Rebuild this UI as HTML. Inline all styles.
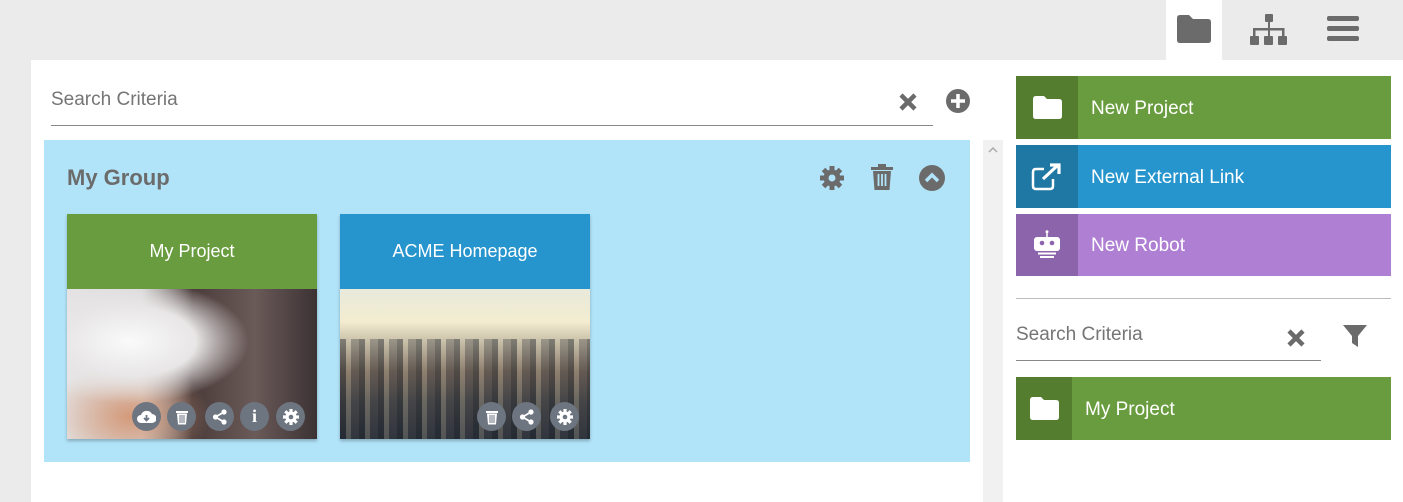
<!DOCTYPE html>
<html><head><style>
*{box-sizing:border-box;margin:0;padding:0}
body{width:1403px;height:502px;background:#ebebeb;font-family:"Liberation Sans",sans-serif;position:relative;overflow:hidden}
.a{position:absolute}
.gray{fill:#6b6b6b}
.btn{position:absolute;left:1016px;width:375px;color:#fff;font-size:19px}
.btn .ic{position:absolute;left:0;top:0;width:62px;height:100%;display:flex;align-items:center;justify-content:center}
.btn span{position:absolute;left:75px;top:50%;transform:translateY(-45%)}
.circ{position:absolute;width:29px;height:29px;border-radius:50%;background:#6d7580;display:flex;align-items:center;justify-content:center}
</style></head><body>
<div class="a" style="left:1166px;top:0;width:56px;height:60px;background:#fff"></div>
<svg class="a" style="left:1176px;top:14px" width="36" height="30"><path class="gray" d="M1 4q0-3 3-3h9l4 4h15q3 0 3 3v18q0 3-3 3H4q-3 0-3-3z"/></svg>
<svg class="a" style="left:1250px;top:14px" width="38" height="32"><g class="gray"><rect x="15" y="0" width="8" height="8" rx="1"/><rect x="0" y="22" width="9" height="9" rx="1"/><rect x="14" y="22" width="9" height="9" rx="1"/><rect x="28" y="22" width="9" height="9" rx="1"/><rect x="18" y="8" width="2" height="14"/><rect x="3" y="14" width="31" height="2.5"/><rect x="3" y="14" width="2.5" height="8"/><rect x="32" y="14" width="2.5" height="8"/></g></svg>
<svg class="a" style="left:1327px;top:16px" width="33" height="28"><g class="gray"><rect x="0" y="0" width="32" height="5" rx="2"/><rect x="0" y="10" width="32" height="5" rx="2"/><rect x="0" y="20" width="32" height="5" rx="2"/></g></svg>
<div class="a" style="left:31px;top:60px;width:1372px;height:442px;background:#fff"></div>
<div class="a" style="left:51px;top:89px;font-size:19px;color:#757575">Search Criteria</div>
<div class="a" style="left:51px;top:125px;width:882px;height:1px;background:#888"></div>
<svg class="a" style="left:898px;top:92px" width="20" height="20"><path d="M3 3L17 17M17 3L3 17" stroke="#6b6b6b" stroke-width="4.5"/></svg>
<svg class="a" style="left:945px;top:88px" width="26" height="26"><circle cx="13" cy="13" r="12" fill="#6b6b6b"/><path d="M13 6v14M6 13h14" stroke="#fff" stroke-width="3.5"/></svg>
<div class="a" style="left:983px;top:140px;width:20px;height:362px;background:#f1f1f1"></div>
<svg class="a" style="left:987px;top:145px" width="12" height="10"><path d="M2 7l4-4 4 4" stroke="#aaa" stroke-width="1.5" fill="none"/></svg>
<div class="a" style="left:44px;top:140px;width:926px;height:322px;background:#b1e3f9"></div>
<div class="a" style="left:67px;top:165px;font-size:22px;font-weight:bold;color:#6b6b6b">My Group</div>
<svg class="a" style="left:819px;top:165px" width="26" height="26" viewBox="0 0 26 26"><g fill="#6b6b6b"><circle cx="13" cy="13" r="8.5"/><g stroke="#6b6b6b" stroke-width="5"><path d="M13 1v24M1 13h24M4.5 4.5l17 17M21.5 4.5l-17 17"/></g></g><circle cx="13" cy="13" r="3.5" fill="#b1e3f9"/></svg>
<svg class="a" style="left:870px;top:164px" width="24" height="27"><g fill="#6b6b6b"><rect x="1" y="3" width="22" height="3"/><rect x="8" y="0" width="8" height="4"/><path d="M3 7h18l-1.5 19h-15z"/></g><path d="M8.5 10v12M12 10v12M15.5 10v12" stroke="#b1e3f9" stroke-width="1.8"/></svg>
<svg class="a" style="left:919px;top:165px" width="26" height="26"><circle cx="13" cy="13" r="13" fill="#6b6b6b"/><path d="M7 16l6-6 6 6" stroke="#b1e3f9" stroke-width="3.5" fill="none"/></svg>
<div class="a" style="left:67px;top:214px;width:250px;height:225px;box-shadow:0 2px 3px rgba(0,0,0,.25);overflow:hidden">
<div style="height:75px;background:#699c3e;color:#fff;font-size:18px;text-align:center;line-height:75px">My Project</div>
<div style="height:150px;background:radial-gradient(ellipse at 25% 35%,#fafafa 0,#e8e6e6 25%,transparent 45%),radial-gradient(ellipse at 25% 85%,#d49a7a 0,transparent 30%),linear-gradient(90deg,#e4e2e2 0,#d8d6d6 30%,#4a3b3a 50%,#6a5a58 75%,#3c3234 100%)"></div>
</div>
<div class="a" style="left:340px;top:214px;width:250px;height:225px;box-shadow:0 2px 3px rgba(0,0,0,.25);overflow:hidden">
<div style="height:75px;background:#2795cd;color:#fff;font-size:18px;text-align:center;line-height:75px">ACME Homepage</div>
<div style="height:150px;position:relative;background:linear-gradient(180deg,#e8eadc 0,#f3ecd0 22%,#c8c0a8 35%,#7a6a5a 55%,#4a4a48 75%,#2a3038 100%)">
<div style="position:absolute;left:0;right:0;top:50px;bottom:0;background:repeating-linear-gradient(90deg,rgba(30,35,45,.45) 0 6px,rgba(200,190,170,.25) 6px 11px,rgba(60,60,70,.35) 11px 19px)"></div></div>
</div>
<div class="circ" style="left:132px;top:402px"><svg width="19" height="14"><path d="M4 13a4 4 0 010-8 6 6 0 0111-1 4.5 4.5 0 010 9z" fill="#fff"/><path d="M9.5 5v5M7 8l2.5 2.5L12 8" stroke="#6d7580" stroke-width="1.8" fill="none"/></svg></div>
<div class="circ" style="left:167px;top:402px"><svg width="14" height="16"><rect x="1" y="2" width="12" height="2" fill="#fff"/><path d="M2 4.5h10l-1 11H3z" fill="#fff"/><path d="M5 6v8M7 6v8M9 6v8" stroke="#6d7580"/></svg></div>
<div class="circ" style="left:205px;top:402px"><svg width="16" height="16"><circle cx="12" cy="3" r="2.6" fill="#fff"/><circle cx="3.5" cy="8" r="2.6" fill="#fff"/><circle cx="12" cy="13" r="2.6" fill="#fff"/><path d="M12 3L3.5 8 12 13" stroke="#fff" stroke-width="1.8" fill="none"/></svg></div>
<div class="circ" style="left:240px;top:402px;color:#fff;font-weight:bold;font-size:18px;font-family:'Liberation Serif',serif">i</div>
<div class="circ" style="left:276px;top:402px"><svg width="18" height="18"><circle cx="9" cy="9" r="5.5" fill="#fff"/><path d="M9 1v16M1 9h16M3.3 3.3l11.4 11.4M14.7 3.3L3.3 14.7" stroke="#fff" stroke-width="3.2"/><circle cx="9" cy="9" r="2.3" fill="#6d7580"/></svg></div>
<div class="circ" style="left:477px;top:402px"><svg width="14" height="16"><rect x="1" y="2" width="12" height="2" fill="#fff"/><path d="M2 4.5h10l-1 11H3z" fill="#fff"/><path d="M5 6v8M7 6v8M9 6v8" stroke="#6d7580"/></svg></div>
<div class="circ" style="left:512px;top:402px"><svg width="16" height="16"><circle cx="12" cy="3" r="2.6" fill="#fff"/><circle cx="3.5" cy="8" r="2.6" fill="#fff"/><circle cx="12" cy="13" r="2.6" fill="#fff"/><path d="M12 3L3.5 8 12 13" stroke="#fff" stroke-width="1.8" fill="none"/></svg></div>
<div class="circ" style="left:550px;top:402px"><svg width="18" height="18"><circle cx="9" cy="9" r="5.5" fill="#fff"/><path d="M9 1v16M1 9h16M3.3 3.3l11.4 11.4M14.7 3.3L3.3 14.7" stroke="#fff" stroke-width="3.2"/><circle cx="9" cy="9" r="2.3" fill="#6d7580"/></svg></div>

<div class="btn" style="top:76px;height:63px;background:#699c3e"><div class="ic" style="background:#557d30"><svg width="29" height="23"><path d="M0 3q0-3 3-3h8l3 3h12q3 0 3 3v14q0 3-3 3H3q-3 0-3-3z" fill="#fff"/></svg></div><span>New Project</span></div>
<div class="btn" style="top:145px;height:63px;background:#2795cd"><div class="ic" style="background:#1f77a4"><svg width="32" height="28"><path d="M13 6H5q-3 0-3 3v14q0 3 3 3h14q3 0 3-3v-7" stroke="#fff" stroke-width="2.5" fill="none"/><path d="M12 16L27 2M19 2h9v9" stroke="#fff" stroke-width="3.2" fill="none"/></svg></div><span>New External Link</span></div>
<div class="btn" style="top:214px;height:62px;background:#ae7fd3"><div class="ic" style="background:#8b64ab"><svg width="30" height="30"><path d="M15 1v6" stroke="#fff" stroke-width="1.5"/><circle cx="15" cy="1.8" r="1.5" fill="#fff"/><rect x="2" y="7" width="26" height="14" rx="3" fill="#fff"/><circle cx="10" cy="13" r="2.3" fill="#8b64ab"/><circle cx="20" cy="13" r="2.3" fill="#8b64ab"/><rect x="6" y="22.5" width="18" height="2" fill="#fff"/><rect x="8" y="26" width="14" height="2" fill="#fff"/></svg></div><span>New Robot</span></div>
<div class="a" style="left:1016px;top:298px;width:375px;height:1px;background:#bbb"></div>
<div class="a" style="left:1016px;top:324px;font-size:19px;color:#757575">Search Criteria</div>
<div class="a" style="left:1016px;top:360px;width:305px;height:1px;background:#888"></div>
<svg class="a" style="left:1286px;top:328px" width="20" height="20"><path d="M3 3L17 17M17 3L3 17" stroke="#6b6b6b" stroke-width="4.5"/></svg>
<svg class="a" style="left:1342px;top:323px" width="26" height="26"><path d="M1 2h24l-9 11v11l-6-4v-7z" fill="#6b6b6b"/></svg>
<div class="btn" style="top:377px;height:63px;background:#699c3e"><div class="ic" style="background:#557d30;width:56px"><svg width="29" height="23"><path d="M0 3q0-3 3-3h8l3 3h12q3 0 3 3v14q0 3-3 3H3q-3 0-3-3z" fill="#fff"/></svg></div><span style="left:69px">My Project</span></div>
</body></html>
